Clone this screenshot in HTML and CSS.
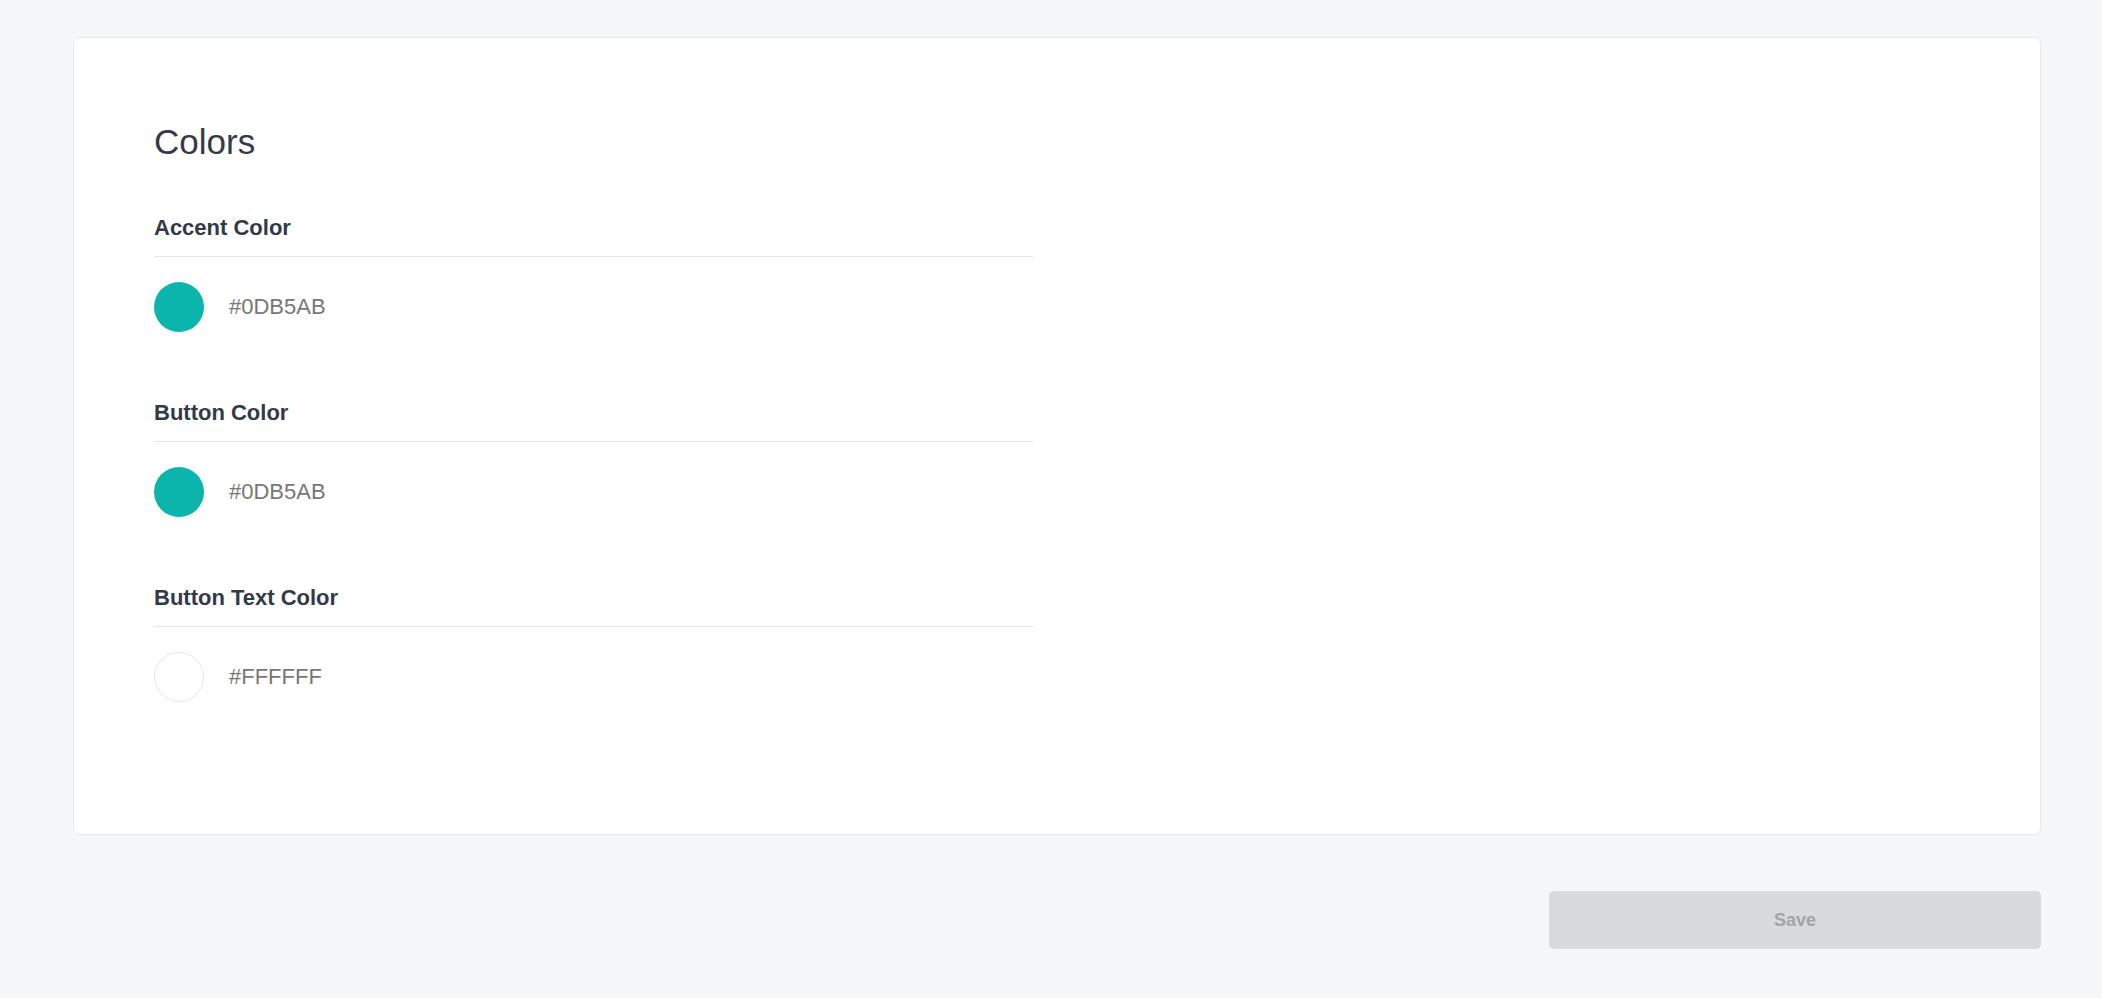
FILE: index.html
```html
<!DOCTYPE html>
<html lang="en">
<head>
<meta charset="utf-8">
<title>Colors</title>
<link rel="stylesheet" href="styles.css">
</head>
<body>
<main class="page">
  <section class="card">
    <h1 class="title">Colors</h1>
    <div class="fields">
      <div class="field">
        <h2 class="label">Accent Color</h2>
        <div class="value">
          <span class="swatch swatch-teal"></span>
          <span class="hex">#0DB5AB</span>
        </div>
      </div>
      <div class="field">
        <h2 class="label">Button Color</h2>
        <div class="value">
          <span class="swatch swatch-teal"></span>
          <span class="hex">#0DB5AB</span>
        </div>
      </div>
      <div class="field">
        <h2 class="label">Button Text Color</h2>
        <div class="value">
          <span class="swatch swatch-white"></span>
          <span class="hex">#FFFFFF</span>
        </div>
      </div>
    </div>
  </section>
  <div class="actions">
    <button class="save" type="button">Save</button>
  </div>
</main>
</body>
</html>
```

FILE: styles.css
```css
html, body {
  margin: 0;
  padding: 0;
  background: #f6f7f9;
  font-family: "Liberation Sans", Arial, Helvetica, sans-serif;
}

.page {
  padding: 37px 61px 0 73px;
  display: flex;
  flex-direction: column;
}

.card {
  background: #ffffff;
  border: 1px solid #e7e8ea;
  border-radius: 6px;
  padding: 84px 80px 132px 80px;
}

.title {
  margin: 0;
  font-size: 35px;
  line-height: 40px;
  font-weight: 400;
  color: #333a48;
}

.fields {
  margin-top: 53px;
  display: flex;
  flex-direction: column;
  gap: 68px;
  width: 879px;
}

.label {
  margin: 0;
  font-size: 22px;
  line-height: 26px;
  font-weight: 700;
  color: #323947;
  padding-bottom: 15px;
  border-bottom: 1px solid #e6e7e9;
}

.value {
  margin-top: 25px;
  display: flex;
  align-items: center;
  gap: 25px;
}

.swatch {
  width: 50px;
  height: 50px;
  border-radius: 50%;
  box-sizing: border-box;
  flex: none;
}

.swatch-teal {
  background: #0bb5ab;
}

.swatch-white {
  background: #ffffff;
  border: 1px solid #e6e6e8;
}

.hex {
  font-size: 22px;
  line-height: 26px;
  color: #777777;
}

.actions {
  display: flex;
  justify-content: flex-end;
  margin-top: 56px;
}

.save {
  width: 492px;
  height: 58px;
  border: none;
  border-radius: 5px;
  background: #d9dadc;
  color: #a3a4a6;
  font-family: "Liberation Sans", Arial, Helvetica, sans-serif;
  font-size: 18px;
  font-weight: 700;
  cursor: default;
}
```
